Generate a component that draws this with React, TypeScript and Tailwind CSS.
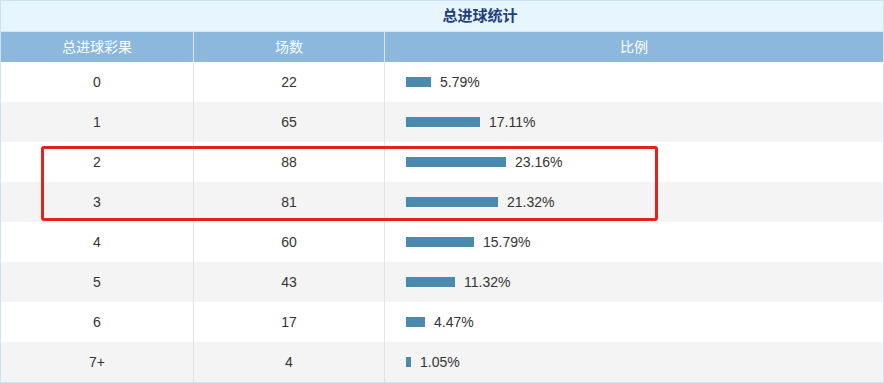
const rows = [
  { k: "0", n: 22, p: 5.79 },
  { k: "1", n: 65, p: 17.11 },
  { k: "2", n: 88, p: 23.16 },
  { k: "3", n: 81, p: 21.32 },
  { k: "4", n: 60, p: 15.79 },
  { k: "5", n: 43, p: 11.32 },
  { k: "6", n: 17, p: 4.47 },
  { k: "7+", n: 4, p: 1.05 },
];

export default function App() {
  return (
    <div
      className="relative w-[884px] h-[383px] bg-white border border-[#cfe2f1] text-[#333]"
      style={{ fontFamily: '"Liberation Sans", Arial, "Noto Sans CJK SC", sans-serif' }}
    >
      <div className="h-[31px] bg-[#e6f5fe] border-b border-[#d3e6f4] flex items-center justify-center pl-[76px]">
        <span className="text-[15px] font-bold text-[#1d3f7c]">总进球统计</span>
      </div>
      <div className="h-[30px] bg-[#8cb8de] flex text-white text-[14px]">
        <div className="w-[193px] flex items-center justify-center border-r border-[#dbe8f4]">总进球彩果</div>
        <div className="w-[191px] flex items-center justify-center border-r border-[#dbe8f4]">场数</div>
        <div className="flex-1 flex items-center justify-center">比例</div>
      </div>
      {rows.map((r, i) => (
        <div key={r.k} className={`h-[40px] flex text-[14px] ${i % 2 ? "bg-[#f4f4f4]" : "bg-white"}`}>
          <div className="w-[193px] flex items-center justify-center border-r border-[#e3e3e3]">{r.k}</div>
          <div className="w-[191px] flex items-center justify-center border-r border-[#e3e3e3]">{r.n}</div>
          <div className="flex-1 flex items-center pl-[21px] gap-[9px]">
            <div className="h-[10px] bg-[#4a8bad]" style={{ width: `${Math.round(r.p * 4.3)}px` }} />
            <span>{r.p.toFixed(2)}%</span>
          </div>
        </div>
      ))}
      <div className="absolute left-[40px] top-[145px] w-[617px] h-[75px] border-[3px] border-[#e0231c] rounded-[3px]" />
    </div>
  );
}
